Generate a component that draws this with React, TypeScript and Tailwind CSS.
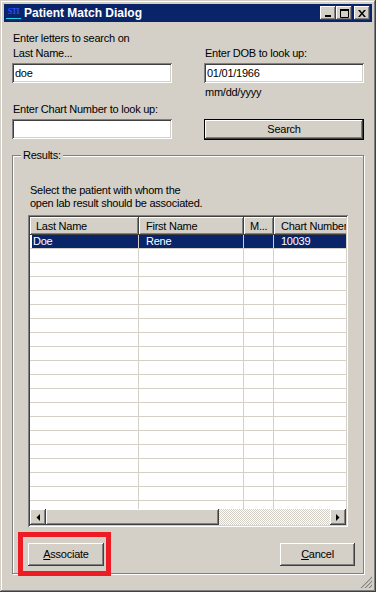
import React from "react";

const sunken =
  "shadow-[inset_1px_1px_#808080,inset_-1px_-1px_#fff,inset_2px_2px_#404040,inset_-2px_-2px_#d4d0c8]";
const raised =
  "shadow-[inset_-1px_-1px_#404040,inset_1px_1px_#fff,inset_-2px_-2px_#808080,inset_2px_2px_#d4d0c8]";

function TitleButton({ children }: { children: React.ReactNode }) {
  return (
    <div className={`w-[16px] h-[14px] bg-[#d4d0c8] flex items-center justify-center ${raised}`}>
      {children}
    </div>
  );
}

function TitleBar() {
  return (
    <div className="h-[18px] bg-[#0a246a] flex items-center pl-[1px] pr-[2px] shrink-0">
      <div className="w-[17px] h-[16px] flex flex-col items-center justify-center">
        <span className="font-['Liberation_Serif',serif] text-[8px] leading-[8px] text-[#2a4cff] font-bold tracking-[-0.5px]">
          STI
        </span>
        <div className="w-[15px] h-[1px] bg-[#22d3ee] mt-[2px]" />
      </div>
      <span className="ml-[2px] text-white font-bold text-[12px] tracking-normal leading-[18px]">
        Patient Match Dialog
      </span>
      <div className="ml-auto flex items-center">
        <TitleButton>
          <svg width="8" height="7" viewBox="0 0 8 7">
            <rect x="1" y="5" width="6" height="2" fill="#000" />
          </svg>
        </TitleButton>
        <TitleButton>
          <svg width="9" height="9" viewBox="0 0 9 9">
            <path d="M0.5 0.5h8v8h-8z" fill="none" stroke="#000" />
            <rect x="0" y="0" width="9" height="2" fill="#000" />
          </svg>
        </TitleButton>
        <div className="w-[2px]" />
        <TitleButton>
          <svg width="8" height="7" viewBox="0 0 8 7">
            <path d="M0 0h2l2 2.5l2-2.5h2l-3 3.5l3 3.5h-2l-2-2.5l-2 2.5h-2l3-3.5z" fill="#000" />
          </svg>
        </TitleButton>
      </div>
    </div>
  );
}

function Field({ value }: { value?: string }) {
  return (
    <div className={`h-[20px] bg-white pl-[3px] pt-[3px] leading-[14px] ${sunken}`}>{value}</div>
  );
}

function Arrow({ dir }: { dir: "left" | "right" }) {
  return (
    <div className={`w-[16px] h-[16px] shrink-0 bg-[#d4d0c8] flex items-center justify-center ${raised}`}>
      <svg width="4" height="7" viewBox="0 0 4 7">
        {dir === "left" ? <path d="M4 0v7L0.5 3.5z" fill="#000" /> : <path d="M0 0v7l3.5-3.5z" fill="#000" />}
      </svg>
    </div>
  );
}

export default function App() {
  const rows = Array.from({ length: 20 });

  return (
    <div className="relative w-[376px] h-[592px] bg-[#d4d0c8] p-[4px] flex flex-col font-['Liberation_Sans',Arial,sans-serif] text-[11px] tracking-[-0.25px] text-black shadow-[inset_-1px_-1px_#404040,inset_1px_1px_#d4d0c8,inset_-2px_-2px_#808080,inset_2px_2px_#fff]">
      <TitleBar />

      <div className="flex-1 flex flex-col px-[8px] pt-[9px]">
        {/* search fields */}
        <div className="flex justify-between">
          <div className="w-[160px] flex flex-col">
            <div className="leading-[15px] pl-[1px]">
              Enter letters to search on
              <br />
              Last Name...
            </div>
            <div className="mt-[2px]">
              <Field value="doe" />
            </div>
            <div className="mt-[19px] leading-[15px] pl-[1px]">Enter Chart Number to look up:</div>
            <div className="mt-[2px]">
              <Field />
            </div>
          </div>

          <div className="w-[160px] flex flex-col">
            <div className="mt-[15px] leading-[15px] pl-[1px]">Enter DOB to look up:</div>
            <div className="mt-[2px]">
              <Field value="01/01/1966" />
            </div>
            <div className="mt-[2px] leading-[15px] pl-[1px]">mm/dd/yyyy</div>
            <div className="mt-[19px] h-[21px] border border-black">
              <div className={`h-full bg-[#d4d0c8] flex items-center justify-center ${raised}`}>Search</div>
            </div>
          </div>
        </div>

        {/* results group */}
        <div className="relative flex-1 mt-[15px] mb-[14px] border border-[#808080] shadow-[inset_1px_1px_#fff,1px_1px_#fff] flex flex-col pl-[15px] pr-[8px]">
          <span className="absolute left-[8px] top-[-8px] px-[2px] bg-[#d4d0c8] leading-[14px]">Results:</span>

          <div className="mt-[28px] ml-[2px] leading-[13px]">
            Select the patient with whom the
            <br />
            open lab result should be associated.
          </div>

          {/* list view */}
          <div className={`mt-[5px] w-[320px] h-[312px] bg-white p-[2px] flex flex-col ${sunken}`}>
            <div className="flex-1 flex flex-col overflow-hidden">
              <div className="flex h-[18px] shrink-0 bg-[#d4d0c8]">
                <div className={`w-[109px] shrink-0 pl-[6px] leading-[18px] ${raised}`}>Last Name</div>
                <div className={`w-[105px] shrink-0 pl-[7px] leading-[18px] ${raised}`}>First Name</div>
                <div className={`w-[30px] shrink-0 pl-[6px] leading-[18px] ${raised}`}>M...</div>
                <div className={`w-[80px] shrink-0 pl-[7px] leading-[18px] whitespace-nowrap ${raised}`}>
                  Chart Number
                </div>
              </div>
              <div className="flex-1 overflow-hidden">
                {rows.map((_, i) => {
                  const sel = i === 0;
                  return (
                    <div
                      key={i}
                      className={`flex h-[14px] border-b border-[#d4d0c8] leading-[13px] ${
                        sel ? "bg-[#0a246a] text-white" : "bg-white"
                      }`}
                    >
                      <div className={`w-[109px] shrink-0 border-r border-[#d4d0c8] pl-[3px] ${sel ? "shadow-[inset_2px_0_#fff]" : ""}`}>
                        {sel ? "Doe" : ""}
                      </div>
                      <div className="w-[105px] shrink-0 border-r border-[#d4d0c8] pl-[7px]">{sel ? "Rene" : ""}</div>
                      <div className="w-[30px] shrink-0 border-r border-[#d4d0c8]" />
                      <div className="w-[80px] shrink-0 pl-[7px]">{sel ? "10039" : ""}</div>
                    </div>
                  );
                })}
              </div>
            </div>
            {/* horizontal scrollbar */}
            <div className="flex h-[16px] shrink-0">
              <Arrow dir="left" />
              <div className={`w-[173px] h-[16px] shrink-0 bg-[#d4d0c8] ${raised}`} />
              <div className="flex-1 bg-[repeating-conic-gradient(#fff_0_25%,#d4d0c8_0_50%)] bg-[length:2px_2px]" />
              <Arrow dir="right" />
            </div>
          </div>

          {/* buttons */}
          <div className="mt-[16px] flex justify-between">
            <div className={`w-[76px] h-[23px] bg-[#d4d0c8] flex items-center justify-center ${raised}`}>
              <span>
                <span className="underline">A</span>ssociate
              </span>
            </div>
            <div className={`w-[75px] h-[23px] bg-[#d4d0c8] flex items-center justify-center ${raised}`}>
              <span>
                <span className="underline">C</span>ancel
              </span>
            </div>
          </div>
        </div>
      </div>

      {/* size grip */}
      <svg className="absolute right-[4px] bottom-[4px]" width="12" height="12" viewBox="0 0 12 12">
        <path d="M11 1L1 11M11 5L5 11M11 9L9 11" stroke="#fff" strokeWidth="1" />
        <path d="M12 1L1 12M12 5L5 12M12 9L9 12" stroke="#808080" strokeWidth="1.2" />
      </svg>

      {/* annotation highlight */}
      <div className="absolute left-[18px] top-[532px] w-[93px] h-[44px] border-[5px] border-[#ed1c24]" />
    </div>
  );
}
